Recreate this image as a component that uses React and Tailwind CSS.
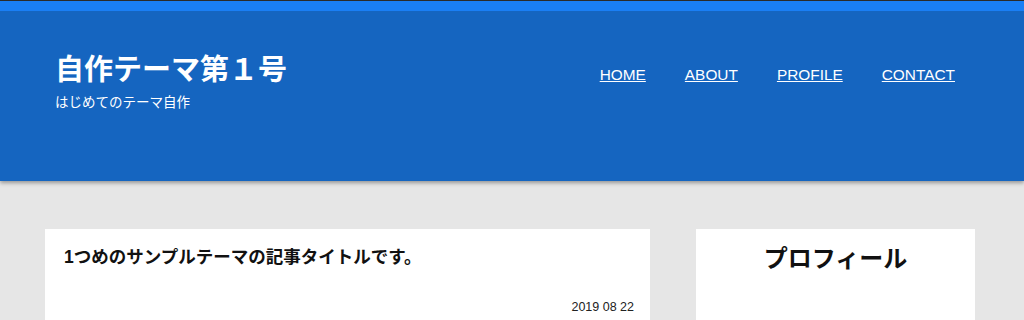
export default function App() {
  const nav = ['HOME', 'ABOUT', 'PROFILE', 'CONTACT'];
  return (
    <div className="min-h-[320px] bg-[#e6e6e6] font-['Liberation_Sans','Noto_Sans_CJK_JP',sans-serif]">
      {/* header */}
      <header className="border-t border-[#2b2b2b] bg-[#1565c0] shadow-[0_2px_4px_rgba(0,0,0,0.35)]">
        <div className="h-[10px] bg-[#1a7ff5]" />
        <div className="flex h-[170px] items-start justify-between pl-[55px] pr-[69px]">
          <div className="pt-[41px]">
            <h1 className="text-[29px] font-bold leading-[37px] text-white">自作テーマ第１号</h1>
            <p className="mt-[4px] text-[13.5px] leading-[20px] text-white">はじめてのテーマ自作</p>
          </div>
          <nav className="flex gap-[39px] pt-[54px]">
            {nav.map((item) => (
              <a key={item} href="#" className="text-[15.4px] leading-[20px] text-white underline">
                {item}
              </a>
            ))}
          </nav>
        </div>
      </header>

      {/* main */}
      <main className="flex items-start gap-[46px] pl-[45px] pr-[49px] pt-[48px]">
        <article className="w-[605px] bg-white pl-[19px] pr-[16px] pt-[16px] pb-[8px]">
          <h2 className="text-[17.5px] font-bold leading-[24px] text-[#111]">
            1つめのサンプルテーマの記事タイトルです。
          </h2>
          <p className="mt-[30px] text-right text-[12.5px] leading-[16px] text-[#222]">2019 08 22</p>
        </article>
        <aside className="h-[100px] flex-1 bg-white pt-[14px]">
          <h3 className="text-center text-[24px] font-bold leading-[32px] text-[#111]">プロフィール</h3>
        </aside>
      </main>
    </div>
  );
}
